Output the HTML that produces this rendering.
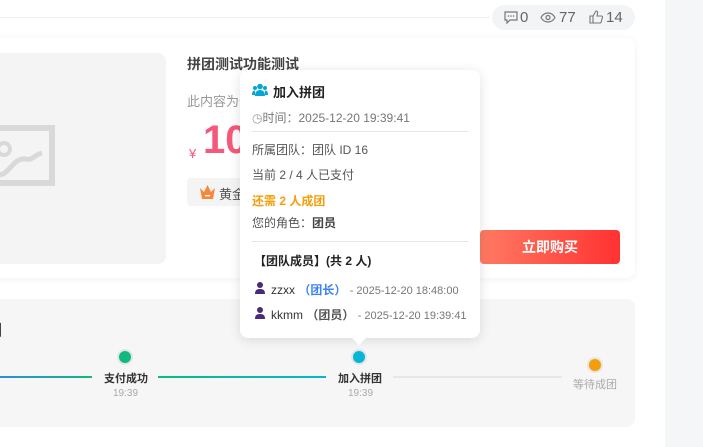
<!DOCTYPE html>
<html><head><meta charset="utf-8"><style>
*{margin:0;padding:0;box-sizing:border-box}
body{width:703px;height:447px;overflow:hidden;background:#fff;font-family:"Liberation Sans","Noto Sans CJK SC",sans-serif;position:relative;color:#333}
.a{position:absolute;white-space:nowrap}
</style></head><body>
<div class="a" style="left:665px;top:0;width:38px;height:447px;background:#f5f6f8"></div>
<div class="a" style="left:0;top:17px;width:490px;height:1px;background:#eef0f3"></div>
<div class="a" style="left:492px;top:5px;width:143px;height:25px;border-radius:13px;background:#f3f4f6;font-size:15px;color:#666;line-height:25px">
 <svg class="a" style="left:12px;top:6px" width="14" height="13" viewBox="0 0 14 13"><path d="M1 1h12v8H6l-3 3V9H1z" fill="none" stroke="#777" stroke-width="1.2"/><circle cx="4.5" cy="5" r=".8" fill="#777"/><circle cx="7" cy="5" r=".8" fill="#777"/><circle cx="9.5" cy="5" r=".8" fill="#777"/></svg>
 <span class="a" style="left:28px">0</span>
 <svg class="a" style="left:48px;top:7px" width="16" height="11" viewBox="0 0 16 11"><path d="M1 5.5C3 2 5.5 1 8 1s5 1 7 4.5C13 9 10.5 10 8 10S3 9 1 5.5z" fill="none" stroke="#777" stroke-width="1.2"/><circle cx="8" cy="5.5" r="2" fill="none" stroke="#777" stroke-width="1.2"/></svg>
 <span class="a" style="left:67px">77</span>
 <svg class="a" style="left:97px;top:5px" width="14" height="14" viewBox="0 0 14 14"><path d="M1 6h3v7H1zM4 6l3-5c1.5 0 2 1 1.5 2.5L8 6h4.5c.8 0 1.2.8 1 1.5l-1.5 5c-.2.5-.6.5-1 .5H4" fill="none" stroke="#777" stroke-width="1.1"/></svg>
 <span class="a" style="left:114px">14</span>
</div>
<div class="a" style="left:-10px;top:38px;width:645px;height:240px;background:#fff;border-radius:8px;box-shadow:0 1px 8px rgba(0,0,0,.06)"></div>
<div class="a" style="left:-10px;top:53px;width:176px;height:211px;background:#f4f4f4;border-radius:8px"></div>
<svg class="a" style="left:0;top:125px" width="56" height="66" viewBox="0 0 56 66"><path d="M0 3H52V58H0" fill="none" stroke="#d9d9d9" stroke-width="6"/><path d="M0 50C10 48 14 32 26 34C32 36 34 30 42 28" fill="none" stroke="#d9d9d9" stroke-width="5"/><circle cx="4" cy="24" r="6" fill="none" stroke="#d9d9d9" stroke-width="4"/></svg>
<div class="a" style="left:187px;top:54px;font-size:14px;font-weight:bold;color:#444">拼团测试功能测试</div>
<div class="a" style="left:187px;top:91px;font-size:13px;color:#999">此内容为付</div>
<div class="a" style="left:189px;top:146px;font-size:13px;color:#f5587a">¥</div>
<div class="a" style="left:203px;top:118px;font-size:40px;font-weight:bold;color:#f5587a">10</div>
<div class="a" style="left:187px;top:178px;width:60px;height:28px;background:#f4f4f4;border-radius:4px"></div>
<svg class="a" style="left:199px;top:184px" width="17" height="16" viewBox="0 0 17 16"><path d="M1 4l4 4 3.5-7L12 8l4-4-2 11H3z" fill="#f5883a"/><rect x="6" y="11" width="5" height="1.3" fill="#fff"/></svg>
<div class="a" style="left:219px;top:184px;font-size:13px;color:#555">黄金</div>
<div class="a" style="left:480px;top:230px;width:140px;height:34px;border-radius:4px;background:linear-gradient(90deg,#ff7a62,#ff3232);color:#fff;font-weight:bold;font-size:14px;text-align:center;line-height:34px">立即购买</div>

<div class="a" style="left:-10px;top:299px;width:645px;height:128px;background:#f6f6f6;border-radius:8px"></div>
<div class="a" style="left:-13px;top:319px;font-size:15px;font-weight:bold;color:#333">团</div>
<div class="a" style="left:0;top:376px;width:92px;height:2px;background:linear-gradient(90deg,#2b8fd6,#10b981)"></div>
<div class="a" style="left:158px;top:376px;width:168px;height:2px;background:linear-gradient(90deg,#10b981,#06b6d4)"></div>
<div class="a" style="left:393px;top:376px;width:169px;height:2px;background:#e5e7eb"></div>
<div class="a" style="left:117px;top:349px;width:16px;height:16px;border-radius:50%;background:#10b981;border:2px solid #e5e5e5"></div>
<div class="a" style="left:351px;top:349px;width:16px;height:16px;border-radius:50%;background:#06b6d4;border:2px solid #e5e5e5"></div>
<div class="a" style="left:587px;top:357px;width:16px;height:16px;border-radius:50%;background:#f59e0b;border:2px solid #e5e5e5"></div>
<div class="a" style="left:104px;top:370px;font-size:11px;font-weight:bold;color:#333">支付成功</div>
<div class="a" style="left:113px;top:388px;font-size:10px;color:#aaa">19:39</div>
<div class="a" style="left:338px;top:370px;font-size:11px;font-weight:bold;color:#333">加入拼团</div>
<div class="a" style="left:348px;top:388px;font-size:10px;color:#aaa">19:39</div>
<div class="a" style="left:573px;top:376px;font-size:11px;color:#aaa">等待成团</div>

<div class="a" style="left:240px;top:70px;width:240px;height:268px;background:#fff;border-radius:8px;box-shadow:0 2px 12px rgba(0,0,0,.12)"></div>
<div class="a" style="left:354px;top:333px;width:10px;height:10px;background:#fff;transform:rotate(45deg)"></div>
<svg class="a" style="left:252px;top:83px" width="16" height="14" viewBox="0 0 16 14"><circle cx="8" cy="3.5" r="2.8" fill="#06a5d4"/><circle cx="3" cy="5" r="2" fill="#06a5d4"/><circle cx="13" cy="5" r="2" fill="#06a5d4"/><path d="M3 13c0-4 2-6 5-6s5 2 5 6z" fill="#06a5d4"/><path d="M0 12c0-3 1-4.5 3-4.5v4.5zM16 12c0-3-1-4.5-3-4.5v4.5z" fill="#06a5d4"/></svg>
<div class="a" style="left:273px;top:82px;font-size:13px;font-weight:bold;color:#222">加入拼团</div>
<div class="a" style="left:252px;top:109px;font-size:12px;color:#777"><span style="color:#999">◷</span>时间：2025-12-20 19:39:41</div>
<div class="a" style="left:252px;top:131px;width:216px;height:1px;background:#e5e7eb"></div>
<div class="a" style="left:252px;top:141px;font-size:12px;color:#555">所属团队：团队 ID 16</div>
<div class="a" style="left:252px;top:166px;font-size:12px;color:#555">当前 2 / 4 人已支付</div>
<div class="a" style="left:252px;top:192px;font-size:12px;font-weight:bold;color:#f59e0b">还需 2 人成团</div>
<div class="a" style="left:252px;top:214px;font-size:12px;color:#555">您的角色：<b style="color:#444">团员</b></div>
<div class="a" style="left:252px;top:241px;width:216px;height:1px;background:#e5e7eb"></div>
<div class="a" style="left:254px;top:252px;font-size:12px;font-weight:bold;color:#222">【团队成员】(共 2 人)</div>
<svg class="a" style="left:255px;top:282px" width="10" height="12" viewBox="0 0 10 12"><circle cx="5" cy="3" r="3" fill="#4b2a7a"/><path d="M0 12c0-4 2-5 5-5s5 1 5 5z" fill="#4b2a7a"/></svg>
<div class="a" style="left:271px;top:281px;font-size:12px;color:#333">zzxx <b style="color:#3b82f6">（团长）</b> <span style="color:#777;font-size:11px">- 2025-12-20 18:48:00</span></div>
<svg class="a" style="left:255px;top:307px" width="10" height="12" viewBox="0 0 10 12"><circle cx="5" cy="3" r="3" fill="#4b2a7a"/><path d="M0 12c0-4 2-5 5-5s5 1 5 5z" fill="#4b2a7a"/></svg>
<div class="a" style="left:271px;top:306px;font-size:12px;color:#333">kkmm <b style="color:#555">（团员）</b> <span style="color:#777;font-size:11px">- 2025-12-20 19:39:41</span></div>
</body></html>
